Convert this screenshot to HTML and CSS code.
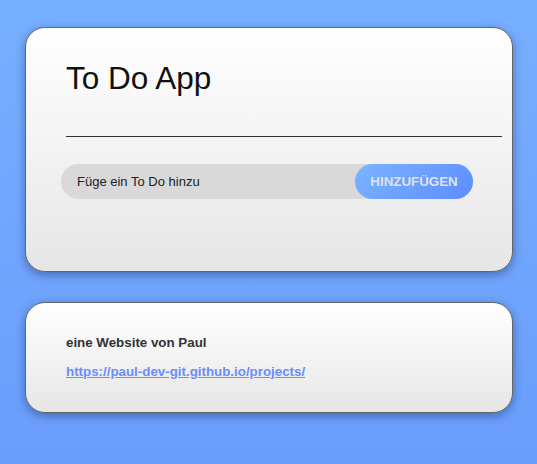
FILE: index.html
```html
<!DOCTYPE html>
<html lang="de">
<head>
<meta charset="utf-8">
<title>To Do App</title>
<link rel="stylesheet" href="styles.css">
</head>
<body>
<main class="page">
  <section class="card card-app">
    <h1 class="title">To Do App</h1>
    <div class="divider"></div>
    <form class="add-row">
      <input class="add-input" type="text" value="Füge ein To Do hinzu">
      <button class="add-btn" type="button">HINZUFÜGEN</button>
    </form>
  </section>
  <section class="card card-footer">
    <p class="credit">eine Website von Paul</p>
    <p class="credit"><a class="credit-link" href="#">https://paul-dev-git.github.io/projects/</a></p>
  </section>
</main>
</body>
</html>
```

FILE: styles.css
```css
html, body {
  margin: 0;
  padding: 0;
  height: 100%;
}
body {
  background: linear-gradient(180deg, #77afff 0%, #6a9dfd 100%);
  font-family: "Liberation Sans", Arial, sans-serif;
  color: #222;
}
.page {
  display: flex;
  flex-direction: column;
  gap: 30px;
  padding: 27px 24px 0 25px;
}
.card {
  border: 1px solid #666;
  border-radius: 20px;
  background: linear-gradient(180deg, #ffffff 0%, #e6e6e6 100%);
  box-shadow: 0 3px 10px rgba(20, 40, 90, 0.45);
}
.card-app {
  padding: 33px 10px 72px 40px;
}
.title {
  margin: 0;
  font-size: 31.5px;
  line-height: 34px;
  font-weight: normal;
  color: #111;
}
.divider {
  margin-top: 41px;
  border-top: 1px solid #333;
}
.add-row {
  display: flex;
  margin: 27px 0 0 -5px;
  width: 412px;
  height: 35px;
  background: #d9d9d9;
  border-radius: 18px;
}
.add-input {
  flex: 1;
  min-width: 0;
  border: 0;
  outline: 0;
  background: transparent;
  padding: 0 0 0 16px;
  font-family: "Liberation Sans", Arial, sans-serif;
  font-size: 13px;
  color: #222;
}
.add-btn {
  width: 118px;
  height: 35px;
  border: 0;
  border-radius: 18px;
  background: linear-gradient(135deg, #7cb4ff 0%, #5e8cff 100%);
  color: #dfe3ee;
  font-family: "Liberation Sans", Arial, sans-serif;
  font-size: 13.33px;
  font-weight: bold;
  padding: 0;
}
.card-footer {
  padding: 19px 10px 20px 40px;
}
.credit {
  margin: 13.33px 0;
  font-size: 13.33px;
  font-weight: bold;
  color: #333;
}
.credit-link {
  color: #6a8cff;
  text-decoration: underline;
}
```
